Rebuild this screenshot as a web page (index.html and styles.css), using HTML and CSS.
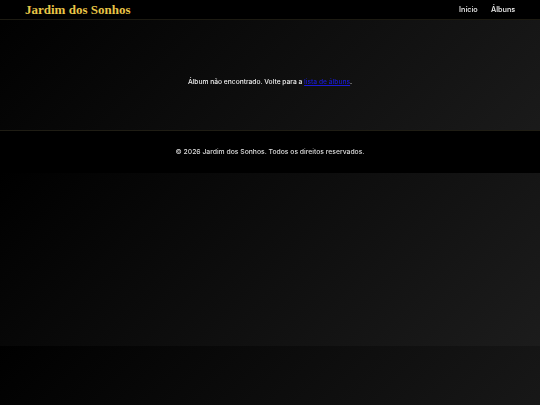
FILE: index.html
```html
<!DOCTYPE html>
<html lang="pt">
<head>
<meta charset="utf-8">
<title>Jardim dos Sonhos</title>
<link rel="stylesheet" href="styles.css">
</head>
<body>
<header class="site-header">
  <a class="brand" href="#">Jardim dos Sonhos</a>
  <nav class="nav">
    <a href="#">Início</a>
    <a href="#">Álbuns</a>
  </nav>
</header>
<main class="content">
  <p class="message">Álbum não encontrado. Volte para a <a href="#" class="link">lista de álbuns</a>.</p>
</main>
<footer class="site-footer">
  <p>© 2026 Jardim dos Sonhos. Todos os direitos reservados.</p>
</footer>
</body>
</html>
```
FILE: styles.css
```css
html {
  margin: 0;
}
body {
  margin: 0;
  font-family: "Inter", "Liberation Sans", sans-serif;
  color: #f0f0f0;
  background: linear-gradient(135deg, #000000 0%, #1c1c1c 100%);
  -webkit-font-smoothing: antialiased;
}
.site-header {
  display: flex;
  align-items: center;
  justify-content: space-between;
  height: 19px;
  padding: 0 25px;
  background: #000;
  border-bottom: 1px solid #1d1b12;
}
.brand {
  font-family: "Liberation Serif", "DejaVu Serif", serif;
  font-weight: bold;
  font-size: 13px;
  color: #e8c547;
  text-decoration: none;
}
.nav {
  display: flex;
  gap: 13px;
}
.nav a {
  color: #f0f0f0;
  text-decoration: none;
  font-size: 7.3px;
  font-weight: 500;
  will-change: transform;
}
.content {
  padding: 57px 20px 43px;
  text-align: center;
}
.message {
  margin: 0;
  font-size: 6.7px;
  line-height: 10px;
  font-weight: 500;
  will-change: transform;
}
.link {
  color: #1a1ad8;
}
.site-footer {
  background: #000;
  border-top: 1px solid #1f1d14;
  padding: 15px 20px 16px;
  text-align: center;
}
.site-footer p {
  margin: 0;
  font-size: 6.8px;
  line-height: 11px;
  font-weight: 500;
  color: #dcdcdc;
  will-change: transform;
}
```
